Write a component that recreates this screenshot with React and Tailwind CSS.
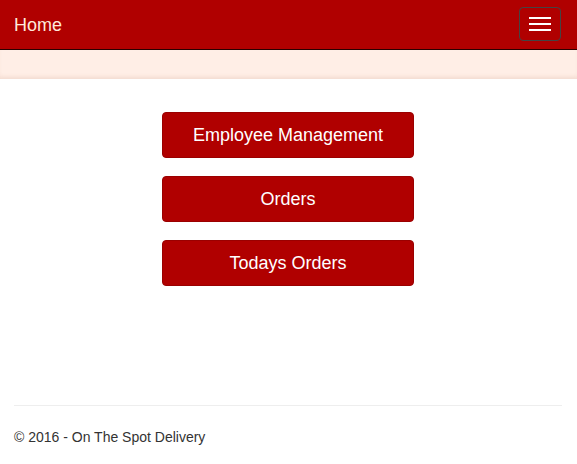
export default function App() {
  const links = ['Employee Management', 'Orders', 'Todays Orders']

  return (
    <div className="min-h-[464px] bg-white font-['Liberation_Sans',Arial,sans-serif] text-[14px] text-[#333]">
      {/* Navbar */}
      <nav className="h-[50px] bg-[#b00000] border-b border-[#2a0000] flex items-center justify-between px-[14px]">
        <a className="text-[18px] text-[#ffe9dc] leading-[20px]">Home</a>
        <button className="w-[42px] h-[34px] mr-[2px] mt-[-1px] rounded-[4px] border border-[#444] flex flex-col items-center justify-center gap-[4px]">
          <span className="block w-[22px] h-[2px] bg-white" />
          <span className="block w-[22px] h-[2px] bg-white" />
          <span className="block w-[22px] h-[2px] bg-white" />
        </button>
      </nav>

      {/* Band */}
      <div className="h-[29px] bg-[#ffeee6] shadow-[inset_0_-4px_4px_-2px_rgba(150,80,50,0.12)]" />

      {/* Menu buttons */}
      <div className="flex flex-col items-center gap-[18px] pt-[33px] pr-[1px]">
        {links.map((label) => (
          <button
            key={label}
            className="w-[252px] h-[46px] rounded-[4px] bg-[#b00000] border border-[#9a0000] text-white text-[18px]"
          >
            {label}
          </button>
        ))}
      </div>

      {/* Footer */}
      <div className="px-[14px] pt-[119px]">
        <hr className="border-t border-[#eee] mr-[1px]" />
        <p className="pt-[21px] leading-[20px]">© 2016 - On The Spot Delivery</p>
      </div>
    </div>
  )
}
